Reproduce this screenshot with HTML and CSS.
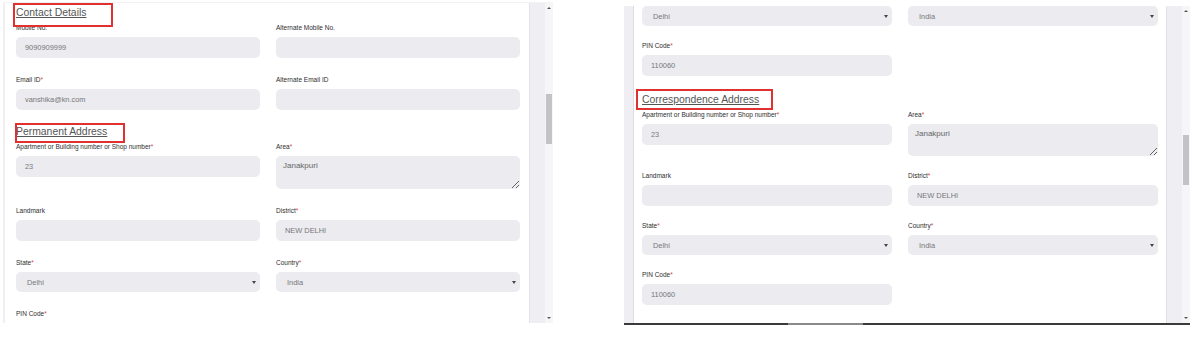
FILE: index.html
```html
<!DOCTYPE html>
<html lang="en">
<head>
    <meta charset="UTF-8">
    <meta name="viewport" content="width=device-width, initial-scale=1.0">
    <title>Address Details</title>
    <link rel="stylesheet" href="styles.css">
</head>
<body>
    <div class="screens">

        <!-- khung trái: liên hệ + địa chỉ thường trú -->
        <div class="screen screen-left">
            <div class="card">
                <h3 class="section-title">Contact Details<i class="mark mark-contact"></i></h3>
                <div class="grid">
                    <div class="field">
                        <label>Mobile No.</label>
                        <input type="text" value="9090909999" readonly>
                    </div>
                    <div class="field">
                        <label>Alternate Mobile No.</label>
                        <input type="text" readonly>
                    </div>
                    <div class="field">
                        <label>Email ID<span class="req">*</span></label>
                        <input type="text" value="vanshika@kn.com" readonly>
                    </div>
                    <div class="field">
                        <label>Alternate Email ID</label>
                        <input type="text" readonly>
                    </div>
                </div>

                <h3 class="section-title">Permanent Address<i class="mark mark-permanent"></i></h3>
                <div class="grid">
                    <div class="field">
                        <label>Apartment or Building number or Shop number<span class="req">*</span></label>
                        <input type="text" value="23" readonly>
                    </div>
                    <div class="field">
                        <label>Area<span class="req">*</span></label>
                        <textarea readonly>Janakpuri</textarea>
                    </div>
                    <div class="field">
                        <label>Landmark</label>
                        <input type="text" readonly>
                    </div>
                    <div class="field">
                        <label>District<span class="req">*</span></label>
                        <input type="text" value="NEW DELHI" readonly>
                    </div>
                    <div class="field">
                        <label>State<span class="req">*</span></label>
                        <div class="select"><select><option>Delhi</option></select></div>
                    </div>
                    <div class="field">
                        <label>Country<span class="req">*</span></label>
                        <div class="select"><select><option>India</option></select></div>
                    </div>
                    <div class="field">
                        <label>PIN Code<span class="req">*</span></label>
                        <input type="text" value="110060" readonly>
                    </div>
                </div>
            </div>
            <div class="gutter"></div>
            <div class="scrollbar">
                <span class="arrow arrow-up"></span>
                <div class="track"><span class="thumb thumb-left"></span></div>
                <span class="arrow arrow-down"></span>
            </div>
        </div>

        <!-- khung phải: địa chỉ liên lạc -->
        <div class="screen screen-right">
            <div class="screen-body">
                <div class="strip"></div>
                <div class="card card-right">
                    <div class="grid">
                        <div class="field">
                            <div class="select"><select><option>Delhi</option></select></div>
                        </div>
                        <div class="field">
                            <div class="select"><select><option>India</option></select></div>
                        </div>
                        <div class="field">
                            <label>PIN Code<span class="req">*</span></label>
                            <input type="text" value="110060" readonly>
                        </div>
                    </div>

                    <h3 class="section-title">Correspondence Address<i class="mark mark-corr"></i></h3>
                    <div class="grid">
                        <div class="field">
                            <label>Apartment or Building number or Shop number<span class="req">*</span></label>
                            <input type="text" value="23" readonly>
                        </div>
                        <div class="field">
                            <label>Area<span class="req">*</span></label>
                            <textarea readonly>Janakpuri</textarea>
                        </div>
                        <div class="field">
                            <label>Landmark</label>
                            <input type="text" readonly>
                        </div>
                        <div class="field">
                            <label>District<span class="req">*</span></label>
                            <input type="text" value="NEW DELHI" readonly>
                        </div>
                        <div class="field">
                            <label>State<span class="req">*</span></label>
                            <div class="select"><select><option>Delhi</option></select></div>
                        </div>
                        <div class="field">
                            <label>Country<span class="req">*</span></label>
                            <div class="select"><select><option>India</option></select></div>
                        </div>
                        <div class="field">
                            <label>PIN Code<span class="req">*</span></label>
                            <input type="text" value="110060" readonly>
                        </div>
                    </div>
                </div>
                <div class="gutter"></div>
                <div class="scrollbar">
                    <span class="arrow arrow-up"></span>
                    <div class="track"><span class="thumb thumb-right"></span></div>
                    <span class="arrow arrow-down"></span>
                </div>
            </div>
            <div class="progress">
                <span class="played"></span>
                <span class="buffered"></span>
                <span class="rest"></span>
            </div>
        </div>

    </div>
</body>
</html>
```

FILE: styles.css
```css
*{
    box-sizing: border-box;
    padding: 0;
    margin: 0;
}
body{
    background-color: white;
    font-family: "Liberation Sans", Arial, sans-serif;
    width: 1200px;
    height: 340px;
    overflow: hidden;
}
.screens{
    display: flex;
    align-items: flex-start;
}
.screen{
    display: flex;
    background-color: #eeeef3;
}
.screen-left{
    margin-top: 2px;
    margin-left: 3px;
    width: 550px;
    height: 321px;
    padding-left: 2px;
    border-top: 1px solid #f2f2f5;
}
.screen-right{
    margin-top: 6px;
    margin-left: 71px;
    width: 566px;
    flex-direction: column;
    background-color: transparent;
}
.screen-body{
    display: flex;
    height: 317px;
    background-color: #eeeef3;
}
.strip{
    width: 10px;
    border-right: 1px solid #dcdce2;
}
.card{
    flex: 1;
    background-color: white;
    padding: 4px 9px 0 11px;
    overflow: hidden;
}
.card-right{
    padding: 0 8px;
}
.gutter{
    width: 16px;
    border-left: 1px solid #e2e2e8;
}
.scrollbar{
    width: 8px;
    display: flex;
    flex-direction: column;
    background-color: #f6f6f8;
}
.arrow{
    height: 10px;
    display: flex;
    justify-content: center;
    align-items: center;
}
.arrow::before{
    content: "";
    border-left: 2px solid transparent;
    border-right: 2px solid transparent;
}
.arrow-up::before{
    border-bottom: 2px solid #555;
}
.arrow-down::before{
    border-top: 2px solid #555;
}
.track{
    flex: 1;
    display: flex;
    justify-content: center;
}
.thumb{
    width: 6px;
    height: 50px;
    background-color: #c3c3c6;
}
.thumb-left{
    margin-top: 81px;
}
.thumb-right{
    margin-top: 119px;
}

/* tiêu đề từng phần + khung đỏ ghi chú */
.section-title{
    position: relative;
    display: block;
    width: fit-content;
    font-size: 10.4px;
    line-height: 12px;
    font-weight: normal;
    color: #555;
    text-decoration: underline;
    margin-bottom: 5px;
}
.grid + .section-title{
    margin-top: 16px;
}
.card-right .grid + .section-title{
    margin-top: 18px;
}
.mark{
    position: absolute;
    border: 2px solid #e0302f;
}
.mark-contact{
    left: -3px;
    top: -4px;
    right: -27px;
    bottom: -8px;
}
.mark-permanent{
    left: -1px;
    top: -3px;
    right: -18px;
    bottom: -5px;
}
.mark-corr{
    left: -6px;
    top: -5px;
    right: -14px;
    bottom: -4px;
}

/* lưới 2 cột các ô nhập */
.grid{
    display: grid;
    grid-template-columns: 1fr 1fr;
    column-gap: 16px;
    row-gap: 18px;
}
.card-right .grid{
    row-gap: 16px;
}
.field{
    display: flex;
    flex-direction: column;
}
.field label{
    font-size: 6.5px;
    line-height: 8px;
    color: #2e2e2e;
    margin-bottom: 5px;
    white-space: nowrap;
}
.req{
    color: #e04646;
}
.field input,
.field textarea,
.field select{
    display: block;
    width: 100%;
    border: 0;
    outline: none;
    border-radius: 5px;
    background-color: #ebebf0;
    font-family: "Liberation Sans", Arial, sans-serif;
    color: #777;
}
.field input{
    height: 21px;
    padding: 0 9px;
    font-size: 7.4px;
}
.field textarea{
    height: 33px;
    padding: 5px 7px;
    font-size: 8px;
    line-height: 10px;
    color: #666;
}
.card-right .field textarea{
    height: 32px;
}
.select{
    position: relative;
}
.select select{
    appearance: none;
    -webkit-appearance: none;
    height: 20px;
    padding: 0 11px;
    font-size: 7.4px;
}
.select::after{
    content: "";
    position: absolute;
    right: 4px;
    top: 9px;
    border-left: 2px solid transparent;
    border-right: 2px solid transparent;
    border-top: 3px solid #444;
}

/* thanh tiến trình video phía dưới */
.progress{
    display: flex;
    height: 2px;
}
.progress span{
    height: 2px;
}
.played{
    width: 164px;
    background-color: #3a3a3a;
}
.buffered{
    width: 75px;
    background-color: #8a8a8a;
}
.rest{
    flex: 1;
    background-color: #3a3a3a;
}
```
